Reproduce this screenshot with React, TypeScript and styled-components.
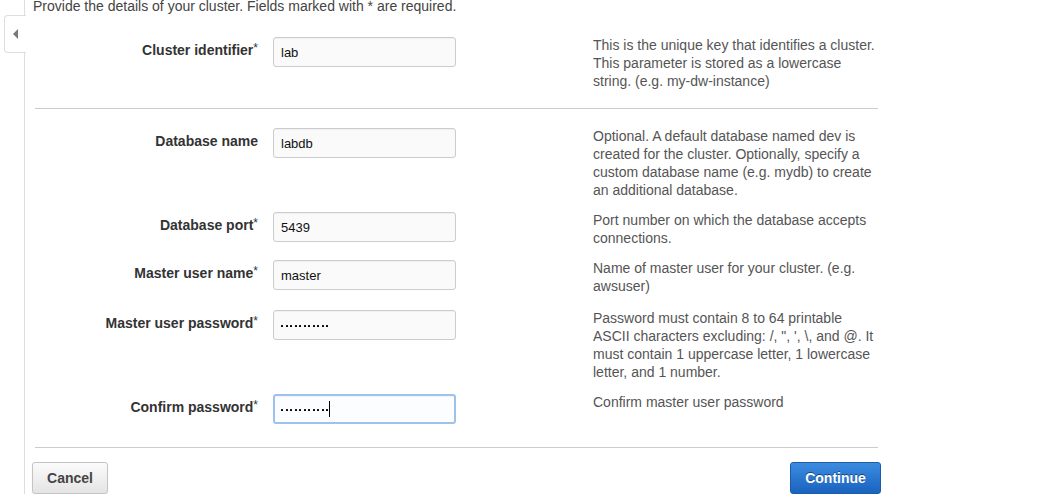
import React from 'react';
import styled, { createGlobalStyle } from 'styled-components';

const GlobalStyle = createGlobalStyle`
  html, body {
    margin: 0;
    padding: 0;
    background: #ffffff;
  }
  body {
    font-family: "Liberation Sans", Arial, sans-serif;
    font-size: 14px;
    color: #444;
  }
`;

const Page = styled.div`
  display: flex;
  height: 494px;
  overflow: hidden;
`;

const SideRail = styled.div`
  position: relative;
  flex: 0 0 24px;
  border-right: 1px solid #dddddd;
`;

const RailTab = styled.div`
  position: absolute;
  left: 4px;
  top: 15px;
  width: 20px;
  height: 36px;
  background: #ffffff;
  border: 1px solid #dddddd;
  border-right: none;
  border-radius: 4px 0 0 4px;
  margin-right: -1px;
  display: flex;
  align-items: center;
  justify-content: center;
  padding-right: 1px;
  box-sizing: content-box;
`;

const Arrow = styled.span`
  width: 0;
  height: 0;
  border-top: 5px solid transparent;
  border-bottom: 5px solid transparent;
  border-right: 5px solid #7a7a7a;
  margin-left: 1px;
`;

const Main = styled.div`
  width: 849px;
  padding-left: 8px;
  display: flex;
  flex-direction: column;
`;

const Intro = styled.p`
  margin: -3px 0 0;
  line-height: 18px;
  color: #444;
`;

const Section = styled.div`
  display: flex;
  flex-direction: column;
  gap: 12px;
  margin-top: ${(p) => p.$top}px;
`;

const Row = styled.div`
  display: flex;
  align-items: flex-start;
  margin-top: ${(p) => p.$extra || 0}px;
`;

const Label = styled.div`
  width: 225px;
  padding-top: 5px;
  text-align: right;
  font-weight: bold;
  color: #333;
  line-height: 18px;
`;

const Req = styled.span`
  font-weight: normal;
  font-size: 12px;
  vertical-align: top;
  line-height: 14px;
`;

const TextBox = styled.div`
  box-sizing: border-box;
  width: 183px;
  height: 30px;
  margin: 1px 0 0 15px;
  padding: 0 7px;
  display: flex;
  align-items: center;
  background: ${(p) => (p.$focused ? '#fcfdff' : '#fafafa')};
  border: ${(p) => (p.$focused ? '2px solid #9fc1ee' : '1px solid #cccccc')};
  padding-left: ${(p) => (p.$focused ? 6 : 7)}px;
  border-radius: 3px;
  box-shadow: inset 0 1px 1px rgba(0, 0, 0, 0.04);
  font-size: 13px;
  color: #111;
`;

const Dots = styled.span`
  display: flex;
  gap: 2.5px;
  align-items: center;
  padding-top: 1px;
`;

const Dot = styled.span`
  width: 2px;
  height: 2px;
  border-radius: 0.5px;
  background: #000;
`;

const Caret = styled.span`
  width: 1px;
  height: 16px;
  background: #000;
  margin-left: 1px;
`;

const Help = styled.div`
  width: 285px;
  margin-left: 137px;
  line-height: 18px;
  color: #555;
`;

const Divider = styled.hr`
  border: none;
  border-top: 1px solid #cccccc;
  height: 0;
  margin: ${(p) => p.$above}px 4px ${(p) => p.$below}px 2px;
`;

const Footer = styled.div`
  display: flex;
  justify-content: space-between;
  margin: 0 1px 0 -1px;
`;

const Button = styled.button`
  box-sizing: border-box;
  height: 32px;
  width: ${(p) => p.$w}px;
  padding: 0;
  border-radius: 3px;
  font-family: "Liberation Sans", Arial, sans-serif;
  font-size: 14px;
  font-weight: bold;
  cursor: pointer;
  border: 1px solid ${(p) => (p.$primary ? '#1c5ca6' : '#c4c4c4')};
  color: ${(p) => (p.$primary ? '#ffffff' : '#444444')};
  background: ${(p) =>
    p.$primary
      ? 'linear-gradient(#3b8be0, #1a63bf)'
      : 'linear-gradient(#fbfbfb, #e4e4e4)'};
  text-shadow: ${(p) => (p.$primary ? '0 -1px 0 rgba(0,0,0,0.45)' : 'none')};
  box-shadow: 0 1px 1px rgba(0, 0, 0, 0.08);
`;

type Field = {
  label: string;
  value?: string;
  dots?: number;
  focused?: boolean;
  extra?: number;
  help: string;
};

const detailFields: Field[] = [
  {
    label: 'Database name',
    value: 'labdb',
    help: 'Optional. A default database named dev is created for the cluster. Optionally, specify a custom database name (e.g. mydb) to create an additional database.',
  },
  {
    label: 'Database port*',
    value: '5439',
    help: 'Port number on which the database accepts connections.',
  },
  {
    label: 'Master user name*',
    value: 'master',
    help: 'Name of master user for your cluster. (e.g. awsuser)',
  },
  {
    label: 'Master user password*',
    dots: 11,
    extra: 2,
    help: 'Password must contain 8 to 64 printable ASCII characters excluding: /, ", \', \\, and @. It must contain 1 uppercase letter, 1 lowercase letter, and 1 number.',
  },
  {
    label: 'Confirm password*',
    dots: 11,
    focused: true,
    help: 'Confirm master user password',
  },
];

const FieldRow = ({ field }: { field: Field }) => {
  const required = field.label.endsWith('*');
  const text = required ? field.label.slice(0, -1) : field.label;
  return (
    <Row $extra={field.extra}>
      <Label>
        {text}
        {required && <Req>*</Req>}
      </Label>
      <TextBox $focused={field.focused}>
        {field.dots ? (
          <Dots>
            {Array.from({ length: field.dots }).map((_, i) => (
              <Dot key={i} />
            ))}
          </Dots>
        ) : (
          field.value
        )}
        {field.focused && <Caret />}
      </TextBox>
      <Help>{field.help}</Help>
    </Row>
  );
};

export default function App() {
  return (
    <>
      <GlobalStyle />
      <Page>
        <SideRail>
          <RailTab>
            <Arrow />
          </RailTab>
        </SideRail>
        <Main>
          <Intro>Provide the details of your cluster. Fields marked with * are required.</Intro>
          <Section $top={21}>
            <FieldRow
              field={{
                label: 'Cluster identifier*',
                value: 'lab',
                help: 'This is the unique key that identifies a cluster. This parameter is stored as a lowercase string. (e.g. my-dw-instance)',
              }}
            />
          </Section>
          <Divider $above={18} $below={18} />
          <Section $top={0}>
            {detailFields.map((f) => (
              <FieldRow key={f.label} field={f} />
            ))}
          </Section>
          <Divider $above={23} $below={14} />
          <Footer>
            <Button $w={76}>Cancel</Button>
            <Button $w={91} $primary>
              Continue
            </Button>
          </Footer>
        </Main>
      </Page>
    </>
  );
}
